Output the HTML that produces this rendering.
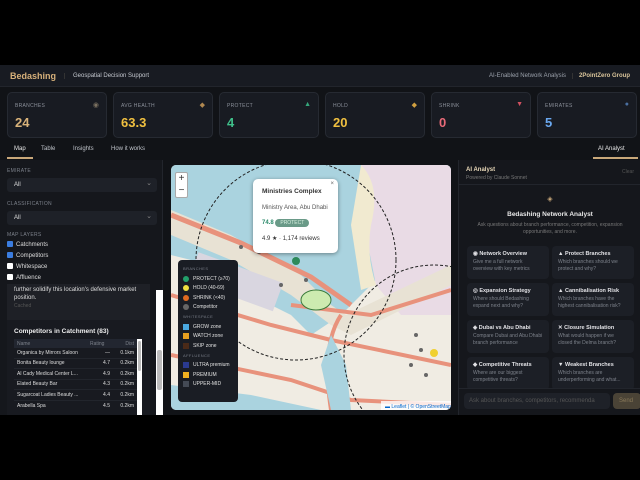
<!DOCTYPE html>
<html><head><meta charset="utf-8"><style>
*{box-sizing:border-box;margin:0;padding:0}
body{width:640px;height:480px;background:#000;font-family:"Liberation Sans",sans-serif;overflow:hidden;position:relative;color:#d8d8dc}
.app{position:absolute;left:0;top:65px;width:640px;height:350px;background:#111317;overflow:hidden}
.hdr{height:22px;background:#181b22;display:flex;align-items:center;padding:0 10px;font-size:6px;color:#9aa0aa;border-bottom:1px solid #22252c}
.logo{color:#d6b07a;font-weight:bold;font-size:9px;margin-right:8px}
.card{position:absolute;top:27px;height:46px;width:100px;background:#181b22;border:1px solid #262a32;border-radius:5px}
.card .l{position:absolute;left:7px;top:10px;font-size:5px;color:#8b909a;letter-spacing:.3px}
.card .v{position:absolute;left:7px;top:22px;font-size:13px;font-weight:bold}
.card .i{position:absolute;right:7px;top:8px;font-size:7px}
.tabs{position:absolute;top:75px;left:0;width:640px;height:20px;font-size:6px;color:#bfc3ca}
.tabs span{position:absolute;top:6px}
.left{position:absolute;left:0;top:95px;width:163px;height:255px;background:#15171c;border-right:1px solid #22252c}
.lab{font-size:5px;color:#7c818b;position:absolute;left:7px;letter-spacing:.3px}
.sel{position:absolute;left:7px;width:150px;height:14px;background:#1e2128;border-radius:3px;font-size:6px;color:#ddd;padding:4px 7px}
.sel:after{content:"⌄";position:absolute;right:5px;top:1px;color:#888;font-size:7px}
.cb{position:absolute;left:7px;font-size:6px;color:#ddd}
.cb i{display:inline-block;width:6px;height:6px;background:#fff;margin-right:3px;vertical-align:-1px;border-radius:1px}
.cb i.on{background:#3b7de0}
.right{position:absolute;left:458px;top:95px;width:182px;height:255px;background:#15171c;border-left:1px solid #22252c}
.q{position:absolute;width:82px;height:33px;background:#1c1f26;border-radius:4px;padding:5px 6px;font-size:5px;color:#7d828b;line-height:7px}
.q b{display:block;color:#e2e2e6;font-size:5.5px;margin-bottom:1px}
.leg{position:absolute;left:178px;top:195px;width:60px;height:142px;background:#1a1d24;border-radius:4px;font-size:5px;color:#e0e0e0;padding:4px 5px}
.leg .h{color:#777c86;font-size:4px;margin:2px 0 3px;letter-spacing:.4px}
.leg div.r{height:9.5px;display:flex;align-items:center}
.leg .d{width:6px;height:6px;border-radius:50%;margin-right:4px}
.leg .s{width:6px;height:6px;margin-right:4px}
</style></head><body>
<div class="app">
<div class="hdr"><span class="logo">Bedashing</span><span style="border-left:1px solid #333;padding-left:8px;color:#c4c8cf">Geospatial Decision Support</span><span style="margin-left:auto">AI-Enabled Network Analysis</span><span style="margin-left:6px;border-left:1px solid #333;padding-left:6px;color:#d9c49a;font-weight:bold">2PointZero Group</span></div>
<div class="card" style="left:7px"><div class="l">BRANCHES</div><div class="i" style="color:#7a7060">◉</div><div class="v" style="color:#d9b37a">24</div></div>
<div class="card" style="left:113px"><div class="l">AVG HEALTH</div><div class="i" style="color:#b08850">◆</div><div class="v" style="color:#f0c040">63.3</div></div>
<div class="card" style="left:219px"><div class="l">PROTECT</div><div class="i" style="color:#35a57a">▲</div><div class="v" style="color:#3fbf8a">4</div></div>
<div class="card" style="left:325px"><div class="l">HOLD</div><div class="i" style="color:#d0a040">◆</div><div class="v" style="color:#f0c040">20</div></div>
<div class="card" style="left:431px"><div class="l">SHRINK</div><div class="i" style="color:#d05060">▼</div><div class="v" style="color:#e86a78">0</div></div>
<div class="card" style="left:537px"><div class="l">EMIRATES</div><div class="i" style="color:#4a6fa0">●</div><div class="v" style="color:#6aa8f0">5</div></div>
<div class="tabs"><span style="left:14px;color:#e8e8e8">Map</span><span style="left:41px">Table</span><span style="left:73px">Insights</span><span style="left:111px">How it works</span><span style="left:598px;color:#e8e8e8">AI Analyst</span>
<div style="position:absolute;left:7px;top:17px;width:26px;height:1.5px;background:#c9a87a"></div><div style="position:absolute;left:593px;top:17px;width:45px;height:1.5px;background:#c9a87a"></div></div>
<div class="left">
<div class="lab" style="top:8px">EMIRATE</div><div class="sel" style="top:18px">All</div>
<div class="lab" style="top:41px">CLASSIFICATION</div><div class="sel" style="top:51px">All</div>
<div class="lab" style="top:72px">MAP LAYERS</div>
<div class="cb" style="top:81px"><i class="on"></i>Catchments</div>
<div class="cb" style="top:92px"><i class="on"></i>Competitors</div>
<div class="cb" style="top:103px"><i></i>Whitespace</div>
<div class="cb" style="top:114px"><i></i>Affluence</div>
<div style="position:absolute;left:7px;top:124px;width:143px;height:36px;background:#1e2026;font-size:6px;color:#ddd;padding:2px 7px;line-height:8px">further solidify this location's defensive market position.<div style="color:#555;font-size:5px">Cached</div></div>
<div style="position:absolute;left:7px;top:160px;width:143px;height:95px;background:#181a20">
<div style="font-size:6.5px;font-weight:bold;color:#eee;position:absolute;left:7px;top:8px">Competitors in Catchment (83)</div>
<div style="position:absolute;left:7px;top:19px;width:123px;font-size:5px;color:#ddd">
<div style="background:#222630;height:9px;display:flex;align-items:center;color:#7d828b;padding:0 3px"><span style="flex:1">Name</span><span style="width:26px">Rating</span><span style="width:18px;text-align:right">Dist</span></div>
<div style="height:10.5px;display:flex;align-items:center;padding:0 3px;border-bottom:1px solid #22252c"><span style="flex:1">Organica by Mirrors Saloon</span><span style="width:26px;text-align:right;padding-right:6px">—</span><span style="width:18px;text-align:right">0.1km</span></div>
<div style="height:10.5px;display:flex;align-items:center;padding:0 3px;border-bottom:1px solid #22252c"><span style="flex:1">Bonita Beauty lounge</span><span style="width:26px;text-align:right;padding-right:6px">4.7</span><span style="width:18px;text-align:right">0.2km</span></div>
<div style="height:10.5px;display:flex;align-items:center;padding:0 3px;border-bottom:1px solid #22252c"><span style="flex:1">Al Cady Medical Center L...</span><span style="width:26px;text-align:right;padding-right:6px">4.9</span><span style="width:18px;text-align:right">0.2km</span></div>
<div style="height:10.5px;display:flex;align-items:center;padding:0 3px;border-bottom:1px solid #22252c"><span style="flex:1">Elated Beauty Bar</span><span style="width:26px;text-align:right;padding-right:6px">4.3</span><span style="width:18px;text-align:right">0.2km</span></div>
<div style="height:10.5px;display:flex;align-items:center;padding:0 3px;border-bottom:1px solid #22252c"><span style="flex:1">Sugarcoat Ladies Beauty ...</span><span style="width:26px;text-align:right;padding-right:6px">4.4</span><span style="width:18px;text-align:right">0.2km</span></div>
<div style="height:10.5px;display:flex;align-items:center;padding:0 3px"><span style="flex:1">Arabella Spa</span><span style="width:26px;text-align:right;padding-right:6px">4.5</span><span style="width:18px;text-align:right">0.2km</span></div>
</div>
<div style="position:absolute;left:130px;top:19px;width:5px;height:76px;background:#fff"><div style="margin:2px 1px;width:3px;height:30px;background:#bbb;border-radius:2px"></div></div>
</div>
<div style="position:absolute;left:156px;top:130px;width:7px;height:125px;background:#fff"><div style="position:absolute;left:1px;top:60px;width:5px;height:40px;background:#bbb;border-radius:2px"></div></div>
</div>
<svg style="position:absolute;left:171px;top:100px;border-radius:5px" width="280" height="245" viewBox="0 0 280 245">
<rect width="280" height="245" fill="#f0ece3"/>
<path d="M0 0H280V90L220 100 170 150 140 170 120 150 80 130 40 100 0 90Z" fill="#aad3df"/>
<path d="M190 0H280V150L230 150 205 120 195 70Z" fill="#e9dbe5"/>
<path d="M190 0Q210 20 200 60 195 90 205 120L190 125 180 60Z" fill="#f1ead0"/>
<path d="M0 45 L60 70 130 110 160 140 175 150 280 100V120L180 170 160 160 120 130 60 95 0 70Z" fill="#e8e2d4"/>
<path d="M0 50 L70 78 140 112 180 140" stroke="#e8927c" stroke-width="5" fill="none"/>
<path d="M120 140 L200 150 280 125" stroke="#e8927c" stroke-width="4" fill="none"/>
<path d="M0 130 L100 160 160 175 280 200" stroke="#e8927c" stroke-width="4" fill="none"/>
<path d="M170 150 Q150 180 160 245" stroke="#e8927c" stroke-width="4" fill="none"/>
<path d="M0 190 L120 215 180 235 280 240" stroke="#e8927c" stroke-width="4" fill="none"/>
<rect x="20" y="100" width="90" height="30" fill="#d9d6e0" transform="rotate(20 60 115)"/>
<path d="M160 170 L175 200 180 245 160 245 150 200Z" fill="#aad3df"/>
<path d="M0 220 L80 230 150 245 0 245Z" fill="#aad3df"/>
<ellipse cx="145" cy="135" rx="15" ry="10" fill="#cdebb0" stroke="#3a7a3a"/>
<circle cx="125" cy="95" r="100" fill="none" stroke="#222" stroke-dasharray="3 2"/>
<circle cx="263" cy="190" r="90" fill="none" stroke="#222" stroke-dasharray="3 2"/>
<circle cx="263" cy="188" r="4" fill="#f0d030"/>
<circle cx="125" cy="96" r="4" fill="#2e8a5a"/>
<g fill="#666"><circle cx="70" cy="82" r="2"/><circle cx="88" cy="87" r="2"/><circle cx="245" cy="170" r="2"/><circle cx="250" cy="185" r="2"/><circle cx="240" cy="200" r="2"/><circle cx="255" cy="210" r="2"/><circle cx="110" cy="120" r="2"/><circle cx="135" cy="115" r="2"/></g>
<rect x="210" y="236" width="70" height="9" fill="#fff" opacity=".8"/>
<text x="214" y="243" font-size="5" fill="#06c" font-family="Liberation Sans">▬ Leaflet | © OpenStreetMap</text>
</svg>
<div style="position:absolute;left:175px;top:107px;width:13px;height:26px;background:#fff;border:1px solid #aaa;border-radius:2px;font-size:10px;color:#333;text-align:center;line-height:12px">+<br>−</div>
<div style="position:absolute;left:253px;top:114px;width:85px;height:74px;background:#fff;border-radius:5px;box-shadow:0 1px 4px rgba(0,0,0,.4);color:#333;font-size:6px;padding:9px 9px">
<div style="font-weight:bold;font-size:6.5px">Ministries Complex</div>
<div style="margin-top:10px;color:#555">Ministry Area, Abu Dhabi</div>
<div style="margin-top:9px;color:#2a8a6a;font-weight:bold">74.8 <span style="background:#6a9a88;color:#d8f0e0;border-radius:6px;padding:1px 5px;font-size:5px;font-weight:normal">PROTECT</span></div>
<div style="margin-top:9px">4.9 ★ · 1,174 reviews</div>
<span style="position:absolute;right:4px;top:2px;color:#666">×</span></div>
<div class="leg">
<div class="h">BRANCHES</div>
<div class="r"><span class="d" style="background:#22a06b"></span>PROTECT (≥70)</div>
<div class="r"><span class="d" style="background:#f0e040"></span>HOLD (40-69)</div>
<div class="r"><span class="d" style="background:#e06a20"></span>SHRINK (&lt;40)</div>
<div class="r"><span class="d" style="background:#666"></span>Competitor</div>
<div class="h">WHITESPACE</div>
<div class="r"><span class="s" style="background:#4aa8e0"></span>GROW zone</div>
<div class="r"><span class="s" style="background:#e8a020"></span>WATCH zone</div>
<div class="r"><span class="s" style="background:#4a2a18"></span>SKIP zone</div>
<div class="h">AFFLUENCE</div>
<div class="r"><span class="s" style="background:#2a3a90"></span>ULTRA premium</div>
<div class="r"><span class="s" style="background:#f0b020"></span>PREMIUM</div>
<div class="r"><span class="s" style="background:#444a55"></span>UPPER-MID</div>
</div>
<div class="right">
<div style="position:absolute;left:7px;top:7px;font-size:6px;font-weight:bold;color:#e8d8b8">AI Analyst</div>
<div style="position:absolute;left:7px;top:15px;font-size:5px;color:#777">Powered by Claude Sonnet</div>
<div style="position:absolute;right:6px;top:9px;font-size:5px;color:#555">Clear</div>
<div style="position:absolute;left:0;top:24px;width:182px;border-top:1px solid #22252c"></div>
<div style="position:absolute;left:0;top:35px;width:182px;text-align:center;color:#c9a87a;font-size:7px">◈</div>
<div style="position:absolute;left:0;top:51px;width:182px;text-align:center;font-size:6.5px;font-weight:bold;color:#e8e8e8">Bedashing Network Analyst</div>
<div style="position:absolute;left:8px;top:62px;width:166px;text-align:center;font-size:5px;color:#777;line-height:7px">Ask questions about branch performance, competition, expansion opportunities, and more.</div>
<div class="q" style="left:8px;top:86px"><b>◉ Network Overview</b>Give me a full network overview with key metrics</div>
<div class="q" style="left:93px;top:86px"><b>▲ Protect Branches</b>Which branches should we protect and why?</div>
<div class="q" style="left:8px;top:123px"><b>◎ Expansion Strategy</b>Where should Bedashing expand next and why?</div>
<div class="q" style="left:93px;top:123px"><b>▲ Cannibalisation Risk</b>Which branches have the highest cannibalisation risk?</div>
<div class="q" style="left:8px;top:160px"><b>◈ Dubai vs Abu Dhabi</b>Compare Dubai and Abu Dhabi branch performance</div>
<div class="q" style="left:93px;top:160px"><b>✕ Closure Simulation</b>What would happen if we closed the Delma branch?</div>
<div class="q" style="left:8px;top:197px"><b>◆ Competitive Threats</b>Where are our biggest competitive threats?</div>
<div class="q" style="left:93px;top:197px"><b>▼ Weakest Branches</b>Which branches are underperforming and what...</div>
<div style="position:absolute;left:0;top:228px;width:182px;height:27px;background:#15171c;border-top:1px solid #22252c"></div>
<div style="position:absolute;left:5px;top:233px;width:146px;height:16px;background:#1e2128;border-radius:4px;font-size:6px;color:#555;padding:5px 5px;white-space:nowrap;overflow:hidden">Ask about branches, competitors, recommenda</div>
<div style="position:absolute;left:154px;top:233px;width:28px;height:16px;background:#4a4336;border-radius:4px;font-size:6px;color:#8a7a5a;padding:5px 6px">Send</div>
</div>
</div>
</body></html>
